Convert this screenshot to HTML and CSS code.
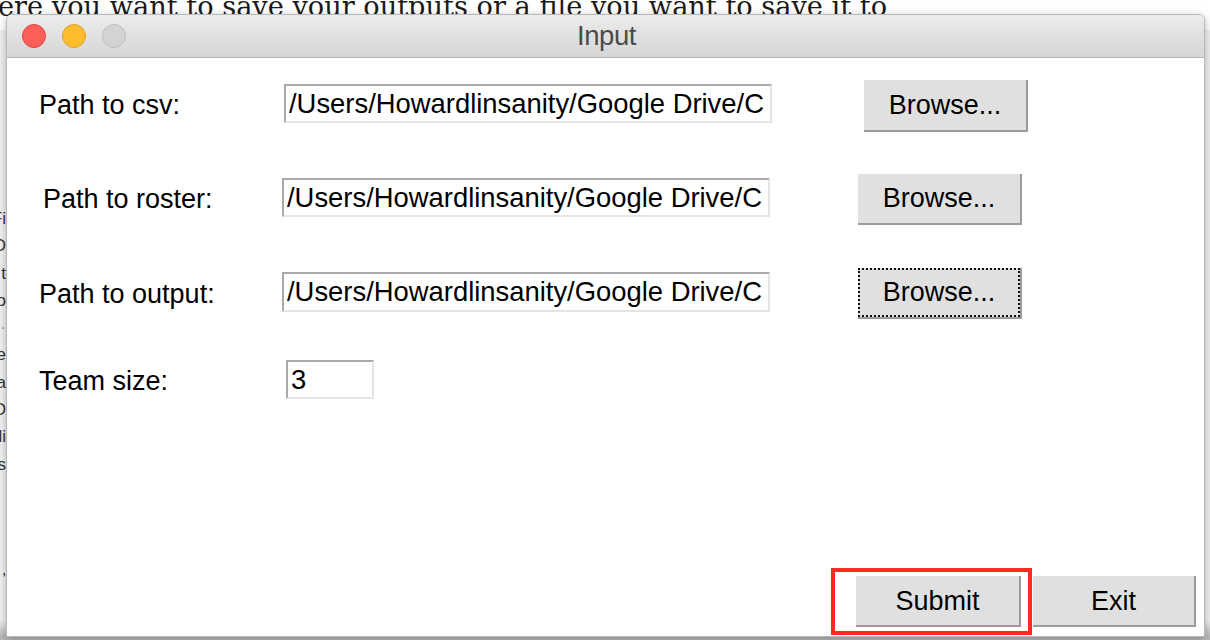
FILE: index.html
```html
<!DOCTYPE html>
<html lang="en">
<head>
<meta charset="utf-8">
<title>Input</title>
<link rel="stylesheet" href="styles.css">
</head>
<body>
<div class="desk">
  <p class="bg-line">ere you want to save your outputs or a file you want to save it to</p>
  <div class="side">
    <div class="side-line"><span>Fi</span></div>
    <div class="side-line"><span>O</span></div>
    <div class="side-line"><span>t</span></div>
    <div class="side-line"><span>o</span></div>
    <div class="side-line side-link"><span>·</span></div>
    <div class="side-line"><span>e</span></div>
    <div class="side-line"><span>a</span></div>
    <div class="side-line"><span>D</span></div>
    <div class="side-line"><span>li</span></div>
    <div class="side-line"><span>s</span></div>
    <div class="side-line"><span></span></div>
    <div class="side-line"><span></span></div>
    <div class="side-line"><span></span></div>
    <div class="side-line side-last"><span>’</span></div>
  </div>

  <div class="window">
    <div class="titlebar">
      <div class="lights">
        <span class="light light-red"></span>
        <span class="light light-yellow"></span>
        <span class="light light-gray"></span>
      </div>
      <div class="title">Input</div>
      <div class="title-spacer"></div>
    </div>

    <div class="content">
      <div class="form">
        <label class="lbl">Path to csv:</label>
        <input class="entry entry-path entry-r1" type="text" value="/Users/Howardlinsanity/Google Drive/C" readonly>
        <button class="btn browse browse-r1">Browse...</button>

        <label class="lbl lbl-r2">Path to roster:</label>
        <input class="entry entry-path" type="text" value="/Users/Howardlinsanity/Google Drive/C" readonly>
        <button class="btn browse">Browse...</button>

        <label class="lbl lbl-r3">Path to output:</label>
        <input class="entry entry-path entry-r3" type="text" value="/Users/Howardlinsanity/Google Drive/C" readonly>
        <button class="btn browse browse-focus">Browse...</button>

        <label class="lbl">Team size:</label>
        <input class="entry entry-team" type="text" value="3" readonly>
      </div>

      <div class="footer">
        <button class="btn action action-submit">Submit</button>
        <button class="btn action action-exit">Exit</button>
      </div>
    </div>

    <div class="annot"></div>
  </div>
</div>
</body>
</html>
```

FILE: styles.css
```css
* {
  box-sizing: border-box;
}

html, body {
  margin: 0;
  padding: 0;
}

body {
  width: 1210px;
  height: 640px;
  overflow: hidden;
  background: #f4f4f4;
}

.desk {
  position: relative;
  width: 1210px;
  height: 640px;
  background: linear-gradient(#ffffff 0, #ffffff 30px, #f1f1f1 30px, #f1f1f1 620px, #b9b9b9 636px);
  overflow: hidden;
}

.bg-line {
  margin: -7px 0 0 -2px;
  font-family: "DejaVu Serif", "Liberation Serif", serif;
  font-size: 27.2px;
  line-height: 28px;
  color: #1a1a1a;
  white-space: nowrap;
}

.side {
  width: 6px;
  padding-top: 184px;
  overflow: hidden;
  font-family: "Liberation Sans", Arial, sans-serif;
  font-size: 17px;
  color: #333;
}

.side-line {
  height: 27.3px;
  line-height: 27px;
  display: flex;
  justify-content: flex-end;
  white-space: nowrap;
}

.side-link {
  color: #7aa7d8;
}

.side-last {
  margin-top: 6px;
}

/* window */
.window {
  position: absolute;
  left: 6px;
  top: 14px;
  width: 1199px;
  height: 623px;
  border: 1px solid #b9b9b9;
  border-radius: 6px 6px 0 0;
  background: #ffffff;
  box-shadow: 0 2px 8px rgba(0, 0, 0, 0.28);
  display: flex;
  flex-direction: column;
}

.titlebar {
  height: 43px;
  flex: none;
  display: grid;
  grid-template-columns: 1fr auto 1fr;
  align-items: center;
  background: linear-gradient(#ececec, #d6d6d6);
  border-bottom: 1px solid #b6b6b6;
  border-radius: 5px 5px 0 0;
}

.lights {
  display: flex;
  gap: 16px;
  padding-left: 15px;
}

.light {
  width: 24px;
  height: 24px;
  border-radius: 50%;
  border: 1px solid;
}

.light-red {
  background: #fc5f57;
  border-color: #e2463f;
}

.light-yellow {
  background: #fdbc2e;
  border-color: #e0a028;
}

.light-gray {
  background: #d3d3d3;
  border-color: #bdbdbd;
}

.title {
  font-family: "Liberation Sans", Arial, sans-serif;
  font-size: 27.5px;
  color: #4b4b4b;
  letter-spacing: -0.4px;
  padding-left: 2px;
}

.content {
  flex: 1;
  display: flex;
  flex-direction: column;
  justify-content: space-between;
  padding-top: 22px;
}

.form {
  display: grid;
  grid-template-columns: 275px 576px auto;
  grid-template-rows: 94px 94px 88px 43px;
  align-items: start;
  justify-items: start;
}

.lbl {
  margin-top: 10px;
  padding-left: 32px;
  font-family: "Liberation Sans", Arial, sans-serif;
  font-size: 27px;
  line-height: 31px;
  color: #000;
}

.lbl-r2 {
  padding-left: 36px;
}

.lbl-r3 {
  margin-top: 11px;
}

.entry {
  margin: 4px 0 0 0;
  height: 39px;
  padding: 0 2px 0 3px;
  border-style: solid;
  border-width: 2px;
  border-color: #a9a9a9 #e5e5e5 #e5e5e5 #a9a9a9;
  background: #ffffff;
  font-family: "Liberation Sans", Arial, sans-serif;
  font-size: 27.4px;
  color: #000;
  outline: none;
}

.entry-path {
  width: 488px;
}

.entry-r1 {
  margin-left: 2px;
}

.entry-r3 {
  height: 40px;
}

.entry-team {
  width: 88px;
  margin-left: 4px;
}

.btn {
  padding: 0;
  border: none;
  border-right: 2px solid #9b9b9b;
  border-bottom: 2px solid #9b9b9b;
  background: #e0e0e0;
  font-family: "Liberation Sans", Arial, sans-serif;
  font-size: 27px;
  color: #000;
}

.browse {
  position: relative;
  width: 164px;
  height: 51px;
}

.browse-r1 {
  margin-left: 6px;
  height: 52px;
}

.browse-focus::after {
  content: "";
  position: absolute;
  inset: 0;
  border: 2px dotted #111;
}

.footer {
  display: flex;
  justify-content: flex-end;
  gap: 12px;
  padding: 0 8px 9px 0;
}

.action {
  height: 51px;
  padding-top: 2px;
}

.action-submit {
  width: 165px;
}

.action-exit {
  width: 163px;
}

.annot {
  position: absolute;
  left: 824px;
  top: 553px;
  width: 201px;
  height: 67px;
  border: 4px solid #fe2b20;
}
```
